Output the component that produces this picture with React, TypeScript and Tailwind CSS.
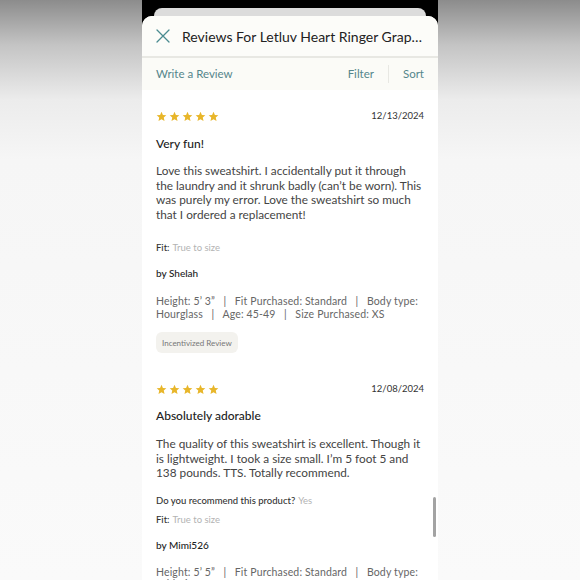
import React from 'react';

interface Review {
  date: string;
  title: string;
  body: string;
  recommend?: string;
  fit: string;
  author: string;
  details: string;
  incentivized?: boolean;
}

const sep = '\u00a0\u00a0\u00a0|\u00a0\u00a0\u00a0';

const reviews: Review[] = [
  {
    date: '12/13/2024',
    title: 'Very fun!',
    body: 'Love this sweatshirt. I accidentally put it through the laundry and it shrunk badly (can’t be worn). This was purely my error. Love the sweatshirt so much that I ordered a replacement!',
    fit: 'True to size',
    author: 'Shelah',
    details: `Height: 5’ 3”${sep}Fit Purchased: Standard${sep}Body type: Hourglass${sep}Age: 45-49${sep}Size Purchased: XS`,
    incentivized: true,
  },
  {
    date: '12/08/2024',
    title: 'Absolutely adorable',
    body: 'The quality of this sweatshirt is excellent. Though it is lightweight. I took a size small. I’m 5 foot 5 and 138 pounds. TTS. Totally recommend.',
    recommend: 'Yes',
    fit: 'True to size',
    author: 'Mimi526',
    details: `Height: 5’ 5”${sep}Fit Purchased: Standard${sep}Body type: Athletic`,
  },
];

const Stars: React.FC = () => (
  <div className="flex gap-[2px]">
    {[0, 1, 2, 3, 4].map((i) => (
      <svg key={i} viewBox="0 0 24 24" className="w-[11px] h-[11px]">
        <path
          d="M12 1.8l3.1 6.9 7.4.7-5.6 5 1.7 7.4L12 17.9l-6.6 3.9 1.7-7.4-5.6-5 7.4-.7z"
          fill="#e8b62a"
        />
      </svg>
    ))}
  </div>
);

const ReviewBlock: React.FC<{ review: Review; first?: boolean }> = ({ review, first }) => (
  <div className={first ? 'mt-[16px]' : 'mt-[26px]'}>
    <div className="h-[20px] flex items-center justify-between">
      <Stars />
      <span className="text-[9.5px] text-[#333]">{review.date}</span>
    </div>
    <div className={`${first ? 'mt-[9px]' : 'mt-[8px]'} h-[18px] flex items-center text-[12px] font-medium text-[#222]`}>
      {review.title}
    </div>
    <p className={`${first ? 'mt-[11px]' : 'mt-[12px]'} text-[11.8px] leading-[14.5px] text-[#444]`}>{review.body}</p>
    {review.recommend && (
      <div className="mt-[14px] h-[14px] flex items-center text-[9.5px] text-[#333]">
        <span className="font-medium">Do you recommend this product?</span>
        <span className="ml-[3px] text-[#b3b3b3]">{review.recommend}</span>
      </div>
    )}
    <div className={`${review.recommend ? 'mt-[5px]' : 'mt-[19px]'} h-[14px] flex items-center text-[9.5px] text-[#333]`}>
      <span className="font-medium">Fit:</span>
      <span className="ml-[3px] text-[#b3b3b3]">{review.fit}</span>
    </div>
    <div className="mt-[11px] h-[14px] flex items-center text-[10px] font-medium text-[#222]">by {review.author}</div>
    <p className={`${first ? 'mt-[15px]' : 'mt-[13px]'} text-[10.5px] leading-[12.5px] text-[#666] tracking-[0.15px]`}>
      {review.details}
    </p>
    {review.incentivized && (
      <div className="mt-[12px] inline-flex h-[21px] items-center px-[6px] rounded-[6px] bg-[#f3f2ee] text-[8px] text-[#777]">
        Incentivized Review
      </div>
    )}
  </div>
);

export default function App() {
  return (
    <div className="w-[580px] h-[580px] overflow-hidden bg-[linear-gradient(to_bottom,#8c8c8c_0px,#c4c4c4_45px,#ececec_100px,#f6f6f6_160px,#fafafa_100%)] font-['Lato',sans-serif]">
      <div className="mx-auto w-[296px] h-full bg-black pt-[8px] flex flex-col">
        <div className="shrink-0 mx-[12px] h-[8px] rounded-t-[8px] bg-[#dcdcdc]" />
        <div className="relative flex-1 min-h-0 rounded-t-[10px] bg-white overflow-hidden flex flex-col">
          <div className="shrink-0 h-[42px] flex items-center px-[14px] bg-[#fcfcf9] border-b-2 border-[#e8e8e3]">
            <svg viewBox="0 0 14 14" className="shrink-0 w-[14px] h-[14px]">
              <path d="M1 1L13 13M13 1L1 13" stroke="#4a8b90" strokeWidth="1.3" strokeLinecap="round" fill="none" />
            </svg>
            <span className="ml-[12px] truncate text-[14px] text-[#222]">
              Reviews For Letluv Heart Ringer Graphic Sweatshirt
            </span>
          </div>
          <div className="shrink-0 h-[32px] flex items-center px-[14px] bg-[#fbfbf7] text-[11.5px] text-[#55868c]">
            <span>Write a Review</span>
            <span className="ml-auto">Filter</span>
            <span className="mx-[14px] w-px h-[18px] bg-[#e8e8e3]" />
            <span>Sort</span>
          </div>
          <div className="shrink-0 px-[14px]">
            {reviews.map((r, i) => (
              <ReviewBlock key={r.date} review={r} first={i === 0} />
            ))}
          </div>
          <div className="absolute right-[2px] top-[481px] w-[3px] h-[40px] rounded-full bg-[#a3a3a3]" />
        </div>
      </div>
    </div>
  );
}
